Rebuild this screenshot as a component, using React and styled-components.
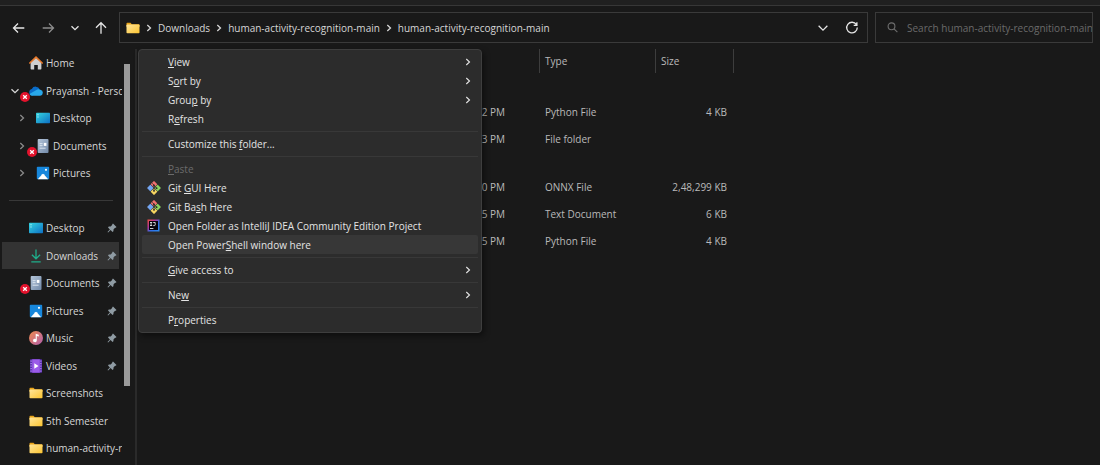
import React from "react";
import styled, { createGlobalStyle, css } from "styled-components";

const GlobalStyle = createGlobalStyle`
  * {
    box-sizing: border-box;
  }

  body {
    margin: 0;
    background: #191919;
    color: #d6d6d6;
    font-family: "Open Sans", "Noto Sans", sans-serif;
    font-size: 10px;
    line-height: 14px;
  }

  button,
  input {
    font: inherit;
    color: inherit;
    background: none;
    border: 0;
    padding: 0;
  }

  ul {
    list-style: none;
    margin: 0;
    padding: 0;
  }

  a {
    color: inherit;
    text-decoration: none;
  }

  svg {
    display: block;
    flex: none;
  }
`;

const Window = styled.div`
  display: flex;
  flex-direction: column;
  height: 100vh;
  overflow: hidden;
`;

const TitleStrip = styled.div`
  flex: none;
  height: 6px;
  background: #202020;
  border-bottom: 1px solid #373737;
`;

const Toolbar = styled.header`
  display: flex;
  align-items: center;
  flex: none;
  height: 43px;
  padding: 0 7px 0 12px;
`;

const NavButtons = styled.div`
  display: flex;
  align-items: center;
  justify-content: space-between;
  width: 96px;
  margin-right: 11px;
`;

const IconButton = styled.button`
  display: flex;
  color: ${(props) => (props.$dim ? "#8c8c8c" : "#e6e6e6")};
`;

const AddressBar = styled.div`
  display: flex;
  align-items: center;
  flex: 1;
  height: 31px;
  padding: 0 8px 0 6px;
  border: 1px solid #3a3a3a;
`;

const Crumbs = styled.nav`
  display: flex;
  align-items: center;
  flex: 1;
  gap: 5px;
`;

const AddressTools = styled.div`
  display: flex;
  align-items: center;
  gap: 17px;
`;

const SearchBox = styled.label`
  display: flex;
  align-items: center;
  gap: 9px;
  width: 218px;
  height: 31px;
  margin-left: 7px;
  padding-left: 11px;
  border: 1px solid #3a3a3a;
  color: #6e6e6e;

  input {
    flex: 1;
    min-width: 0;
    outline: 0;
  }

  input::placeholder {
    color: #6a6a6a;
    opacity: 1;
  }
`;

const Body = styled.div`
  display: flex;
  flex: 1;
  min-height: 0;
`;

const Sidebar = styled.aside`
  display: flex;
  flex: none;
  width: 137px;
  padding-left: 2px;
  border-right: 2px solid #2a2a2a;
`;

const Tree = styled.ul`
  flex: none;
  width: 120px;
  overflow: hidden;
`;

const TreeItem = styled.li`
  display: flex;
  align-items: center;
  height: 27px;
  margin-right: 3px;
  padding-right: 2px;
  background: ${(props) => (props.$selected ? "#333333" : "none")};

  &:nth-child(odd) {
    margin-bottom: 1px;
  }

  a {
    display: flex;
    align-items: center;
    flex: 1;
    gap: 3px;
    min-width: 0;
    white-space: nowrap;
  }
`;

const Expander = styled.span`
  display: flex;
  justify-content: flex-end;
  flex: none;
  width: ${(props) => (props.$child ? "34px" : "27px")};
  padding-right: 10px;
  color: ${(props) => (props.$child ? "#8a8a8a" : "#d6d6d6")};
`;

const IconSlot = styled.span`
  position: relative;
  flex: none;
`;

const Badge = styled.svg`
  position: absolute;
  left: -9px;
  bottom: -4px;
`;

const Label = styled.span`
  flex: 1;
`;

const Rule = styled.hr`
  flex: 1;
  height: 1px;
  margin: 0 4px 0 7px;
  border: 0;
  background: #383838;
`;

const ScrollThumb = styled.div`
  width: 6px;
  height: 322px;
  margin: 15px 0 0 2px;
  background: #9a9a9a;
`;

const Content = styled.main`
  position: relative;
  flex: 1;
  min-width: 0;
`;

const FileTable = styled.table`
  table-layout: fixed;
  border-collapse: separate;
  border-spacing: 0;
  width: 597px;
  color: #b9b9b9;

  th {
    height: 24px;
    padding: 0 5px;
    border-right: 1px solid #3d3d3d;
    font-weight: 400;
    text-align: left;
  }

  td {
    height: 27px;
    padding: 0 5px;
  }

  td:first-child {
    padding-right: 35px;
    text-align: right;
  }

  td:last-child {
    padding-right: 7px;
    text-align: right;
  }
`;

const GroupGap = styled.tr`
  td {
    height: ${(props) => (props.$first ? "25px" : "21px")};
  }
`;

const Menu = styled.ul`
  position: absolute;
  top: 0;
  left: 1px;
  width: 344px;
  padding: 2px 3px 3px;
  border: 1px solid #3e3e3e;
  border-radius: 4px;
  background: #2c2c2c;
  box-shadow: 2px 3px 6px rgba(0, 0, 0, 0.45);
`;

const MenuButton = styled.button`
  display: flex;
  align-items: center;
  width: 100%;
  height: 19px;
  padding: 0 6px 0 5px;
  border-radius: 2px;
  color: #e4e4e4;
  text-align: left;
  ${(props) =>
    props.$active &&
    css`
      background: #373737;
    `}

  &:disabled {
    color: #6b6b6b;
  }

  u {
    text-underline-offset: 1px;
  }
`;

const MenuIcon = styled.span`
  flex: none;
  width: 21px;
`;

const MenuRule = styled.li`
  height: 6px;
  padding-top: 3px;

  &::before {
    content: "";
    display: block;
    height: 1px;
    background: #383838;
  }
`;

const Chevron = ({ size = 8, dir = "right", width = 1.3 }) => (
  <svg width={size} height={size} viewBox="0 0 8 8" fill="none" stroke="currentColor" strokeWidth={width}>
    <path d={dir === "right" ? "M2.3 1 5.5 4 2.3 7" : "M.5 2.2 4 5.7 7.5 2.2"} />
  </svg>
);

const Arrow = ({ dir }) => (
  <svg width="14" height="14" viewBox="0 0 14 14" fill="none" stroke="currentColor" strokeWidth="1.3">
    {dir === "left" && <path d="M12.3 7H1.8M6 2.5 1.5 7 6 11.5" />}
    {dir === "right" && <path d="M1.7 7h10.5M8 2.5 12.5 7 8 11.5" />}
    {dir === "up" && <path d="M7 12.8V2M2 6.7 7 1.7l5 5" />}
  </svg>
);

const RefreshIcon = () => (
  <svg width="14" height="14" viewBox="0 0 14 14" fill="none" stroke="currentColor" strokeWidth="1.3">
    <path d="M11.4 3.6A5.3 5.3 0 1 0 12.3 6.6M11.9 1.2v3.2H8.700" />
  </svg>
);

const SearchIcon = () => (
  <svg width="11" height="11" viewBox="0 0 11 11" fill="none" stroke="currentColor" strokeWidth="1.1">
    <circle cx="4.5" cy="4.3" r="3.4" />
    <path d="m7 6.8 3.4 3.4" />
  </svg>
);

const PinIcon = () => (
  <svg width="10" height="10" viewBox="0 0 10 10" fill="#8f9ba3">
    <path d="M6 .5 9.5 4 8.800 4.800 8.200 4.700 6.600 6.300 6.400 8.200 5.500 9 3.600 7.100 1.100 9.500.5 8.900 2.900 6.400 1 4.500 1.800 3.600 3.700 3.400 5.300 1.800 5.200 1.300Z" />
  </svg>
);

const FolderIcon = () => (
  <svg width="14" height="14" viewBox="0 0 14 14">
    <defs>
      <linearGradient id="folder" x1="0" y1="0" x2="1" y2="1">
        <stop offset="0" stopColor="#ffe59a" />
        <stop offset="1" stopColor="#fbc431" />
      </linearGradient>
    </defs>
    <path d="M.5 2.600q0-.8.8-.8h3.200l1.300 1.400h7q.7 0 .7.7v2H.5z" fill="#e8a317" />
    <rect x=".5" y="3.500" width="13" height="8.700" rx=".8" fill="url(#folder)" />
  </svg>
);

const HomeIcon = () => (
  <svg width="14" height="14" viewBox="0 0 14 14">
    <path d="M1.600 6.500 7 1.500l5.400 5v6.300q0 .7-.7.7H8.800V9H5.200v4.500H2.300q-.7 0-.7-.7z" fill="#cfcfcf" />
    <path d="M.8 7 7 1.200 13.200 7" fill="none" stroke="#e8792b" strokeWidth="1.600" strokeLinecap="round" />
  </svg>
);

const CloudIcon = () => (
  <svg width="14" height="14" viewBox="0 0 14 14">
    <path d="M3.300 11.500A3.300 3.300 0 0 1 2.800 5 4.400 4.400 0 0 1 10.800 5.400L7 9z" fill="#0a6cc9" />
    <path d="M3 11.800q-1.700-.3-2.600-1.700L7 6.200q2-1.600 4.400-.5a3.100 3.100 0 0 1-.2 6.100z" fill="#28a8ea" />
  </svg>
);

const DesktopIcon = () => (
  <svg width="14" height="14" viewBox="0 0 14 14">
    <defs>
      <linearGradient id="desk" x1="0" y1="0" x2="1" y2="1">
        <stop offset="0" stopColor="#35d6e0" />
        <stop offset="1" stopColor="#0d6fc4" />
      </linearGradient>
    </defs>
    <rect y="1.700" width="14" height="10.600" rx=".7" fill="url(#desk)" />
    <path d="M1.500 3.200h1v1h-1zM1.500 5.400h1v1h-1z" fill="#d8fbff" />
  </svg>
);

const DocumentIcon = () => (
  <svg width="14" height="14" viewBox="0 0 14 14">
    <defs>
      <linearGradient id="doc" x1="0" y1="0" x2="1" y2="1">
        <stop offset="0" stopColor="#b5c6da" />
        <stop offset="1" stopColor="#7189a8" />
      </linearGradient>
    </defs>
    <rect x="1.700" width="10.800" height="14" rx=".9" fill="url(#doc)" />
    <path d="M3.600 4.700h3M3.600 6.700h3M3.600 9.200h6" stroke="#eef4fa" strokeWidth=".8" />
    <rect x="7.800" y="3.900" width="2.600" height="3" fill="#fff" />
  </svg>
);

const PictureIcon = () => (
  <svg width="14" height="14" viewBox="0 0 14 14">
    <rect x=".8" y=".8" width="12.400" height="12.400" rx=".9" fill="#1787dc" />
    <path d="M1.800 13.200 6.200 8.200q.8-.9 1.600 0l4.400 5z" fill="#fff" />
    <circle cx="10" cy="3.800" r="1.100" fill="#fff" />
  </svg>
);

const DownloadIcon = () => (
  <svg width="14" height="14" viewBox="0 0 14 14" fill="none" stroke="#1fae8b" strokeWidth="1.300">
    <path d="M7 .6v9M2.900 5.800 7 9.800l4.100-4M2.300 12.800h9.400" />
  </svg>
);

const MusicIcon = () => (
  <svg width="14" height="14" viewBox="0 0 14 14">
    <defs>
      <linearGradient id="music" x1="0" y1="0" x2="1" y2="1">
        <stop offset="0" stopColor="#f08a4b" />
        <stop offset="1" stopColor="#b15fae" />
      </linearGradient>
    </defs>
    <circle cx="7" cy="7" r="7" fill="url(#music)" />
    <path d="M6.700 2.700 9.800 3.700v1.800l-2-.6v4.600a1.900 1.700 0 1 1-1.100-1.600z" fill="#fff" />
  </svg>
);

const VideoIcon = () => (
  <svg width="14" height="14" viewBox="0 0 14 14">
    <rect x="1" y=".3" width="12" height="13.400" rx=".8" fill="#5a2fb0" />
    <rect x="3.200" y=".3" width="7.600" height="13.400" fill="#9b5be8" />
    <path d="M2.100 1.500v11.500M11.900 1.500v11.500" stroke="#c9a6f7" strokeWidth="1" strokeDasharray="1.200 1.300" />
    <path d="M5.300 4.300 9.500 7 5.300 9.700z" fill="#fff" />
  </svg>
);

const ErrorBadge = () => (
  <Badge width="10" height="10" viewBox="0 0 10 10">
    <circle cx="5" cy="5" r="5" fill="#e2122c" />
    <path d="m3.200 3.200 3.600 3.600M6.800 3.200 3.200 6.800" stroke="#fff" strokeWidth="1.300" />
  </Badge>
);

const GitIcon = () => (
  <svg width="14" height="14" viewBox="0 0 14 14">
    <g transform="rotate(45 7 7)">
      <rect x="2" y="2" width="4.800" height="4.800" rx=".5" fill="#f0716f" />
      <rect x="7.200" y="2" width="4.800" height="4.800" rx=".5" fill="#8bd65f" />
      <rect x="2" y="7.200" width="4.800" height="4.800" rx=".5" fill="#74a6f2" />
      <rect x="7.200" y="7.200" width="4.800" height="4.800" rx=".5" fill="#f7d661" />
    </g>
    <path d="M5.300 2.300 7 4.200v6M7 4.600l2.600 2.600" stroke="#2b2b2b" strokeWidth=".8" fill="none" />
    <circle cx="7" cy="4.400" r=".9" fill="#2b2b2b" />
    <circle cx="7" cy="9.800" r=".9" fill="#2b2b2b" />
    <circle cx="9.600" cy="7.200" r=".9" fill="#2b2b2b" />
  </svg>
);

const IdeaIcon = () => (
  <svg width="13" height="13" viewBox="0 0 13 13">
    <defs>
      <linearGradient id="idea" x1="0" y1="0" x2="1" y2="1">
        <stop offset="0" stopColor="#f0503c" />
        <stop offset=".35" stopColor="#b5339a" />
        <stop offset=".6" stopColor="#2f6fe8" />
        <stop offset="1" stopColor="#2b8cf0" />
      </linearGradient>
    </defs>
    <rect x=".5" y=".5" width="12" height="12" fill="url(#idea)" />
    <rect x="2" y="2" width="9" height="9" fill="#08030c" />
    <path d="M3 3.500h2.200M4.100 3.500v3M3 6.500h2.200M6.200 3.500h2v2.300q0 .8-.8.8H6.200M3 9.500h3.400" stroke="#fff" strokeWidth=".8" fill="none" />
  </svg>
);

const places = [
  { label: "Home", icon: HomeIcon },
  { label: "Prayansh - Personal", icon: CloudIcon, open: true, error: true },
  { label: "Desktop", icon: DesktopIcon, child: true },
  { label: "Documents", icon: DocumentIcon, child: true, error: true },
  { label: "Pictures", icon: PictureIcon, child: true },
  { rule: true },
  { label: "Desktop", icon: DesktopIcon, pinned: true },
  { label: "Downloads", icon: DownloadIcon, pinned: true, selected: true },
  { label: "Documents", icon: DocumentIcon, pinned: true, error: true },
  { label: "Pictures", icon: PictureIcon, pinned: true },
  { label: "Music", icon: MusicIcon, pinned: true },
  { label: "Videos", icon: VideoIcon, pinned: true },
  { label: "Screenshots", icon: FolderIcon },
  { label: "5th Semester", icon: FolderIcon },
  { label: "human-activity-recognition", icon: FolderIcon },
];

const groups = [
  [
    ["2 PM", "Python File", "4 KB"],
    ["3 PM", "File folder", ""],
  ],
  [
    ["0 PM", "ONNX File", "2,48,299 KB"],
    ["5 PM", "Text Document", "6 KB"],
    ["5 PM", "Python File", "4 KB"],
  ],
];

const menu = [
  { text: <><u>V</u>iew</>, more: true },
  { text: <>S<u>o</u>rt by</>, more: true },
  { text: <>Grou<u>p</u> by</>, more: true },
  { text: <>R<u>e</u>fresh</> },
  null,
  { text: <>Customize this <u>f</u>older...</> },
  null,
  { text: <><u>P</u>aste</>, disabled: true },
  { text: <>Git <u>G</u>UI Here</>, icon: <GitIcon /> },
  { text: <>Git Ba<u>s</u>h Here</>, icon: <GitIcon /> },
  { text: "Open Folder as IntelliJ IDEA Community Edition Project", icon: <IdeaIcon /> },
  { text: <>Open Power<u>S</u>hell window here</>, active: true },
  null,
  { text: <><u>G</u>ive access to</>, more: true },
  null,
  { text: <>Ne<u>w</u></>, more: true },
  null,
  { text: <>P<u>r</u>operties</> },
];

const Place = ({ label, icon: Icon, child, open, error, pinned, selected }) => (
  <TreeItem $selected={selected}>
    <Expander $child={child}>
      {child && <Chevron />}
      {open && <Chevron dir="down" />}
    </Expander>
    <a href="#">
      <IconSlot>
        <Icon />
        {error && <ErrorBadge />}
      </IconSlot>
      <Label>{label}</Label>
      {pinned && <PinIcon />}
    </a>
  </TreeItem>
);

const ContextMenu = () => (
  <Menu>
    {menu.map((item, i) =>
      item ? (
        <li key={i}>
          <MenuButton type="button" $active={item.active} disabled={item.disabled}>
            <MenuIcon>{item.icon}</MenuIcon>
            <Label>{item.text}</Label>
            {item.more && <Chevron width={1.1} />}
          </MenuButton>
        </li>
      ) : (
        <MenuRule key={i} />
      )
    )}
  </Menu>
);

const App = () => {
  return (
    <Window>
      <GlobalStyle />
      <TitleStrip />
      <Toolbar>
        <NavButtons>
          <IconButton type="button" aria-label="Back">
            <Arrow dir="left" />
          </IconButton>
          <IconButton type="button" aria-label="Forward" $dim>
            <Arrow dir="right" />
          </IconButton>
          <IconButton type="button" aria-label="Recent locations">
            <Chevron dir="down" />
          </IconButton>
          <IconButton type="button" aria-label="Up">
            <Arrow dir="up" />
          </IconButton>
        </NavButtons>
        <AddressBar>
          <Crumbs>
            <FolderIcon />
            <Chevron />
            <a href="#">Downloads</a>
            <Chevron />
            <a href="#">human-activity-recognition-main</a>
            <Chevron />
            <a href="#">human-activity-recognition-main</a>
          </Crumbs>
          <AddressTools>
            <IconButton type="button" aria-label="Previous locations">
              <Chevron dir="down" size={10} width={1} />
            </IconButton>
            <IconButton type="button" aria-label="Refresh">
              <RefreshIcon />
            </IconButton>
          </AddressTools>
        </AddressBar>
        <SearchBox>
          <SearchIcon />
          <input type="text" aria-label="Search" placeholder="Search human-activity-recognition-main" />
        </SearchBox>
      </Toolbar>
      <Body>
        <Sidebar>
          <Tree>
            {places.map((place, i) =>
              place.rule ? (
                <TreeItem key={i}>
                  <Rule />
                </TreeItem>
              ) : (
                <Place key={i} {...place} />
              )
            )}
          </Tree>
          <ScrollThumb />
        </Sidebar>
        <Content>
          <FileTable>
            <colgroup>
              <col style={{ width: 403 }} />
              <col style={{ width: 116 }} />
              <col style={{ width: 78 }} />
            </colgroup>
            <thead>
              <tr>
                <th aria-label="Date modified" />
                <th>Type</th>
                <th>Size</th>
              </tr>
            </thead>
            {groups.map((rows, g) => (
              <tbody key={g}>
                <GroupGap $first={g === 0}>
                  <td colSpan={3} />
                </GroupGap>
                {rows.map((row, r) => (
                  <tr key={r}>
                    {row.map((cell, c) => (
                      <td key={c}>{cell}</td>
                    ))}
                  </tr>
                ))}
              </tbody>
            ))}
          </FileTable>
          <ContextMenu />
        </Content>
      </Body>
    </Window>
  );
};

export default App;
